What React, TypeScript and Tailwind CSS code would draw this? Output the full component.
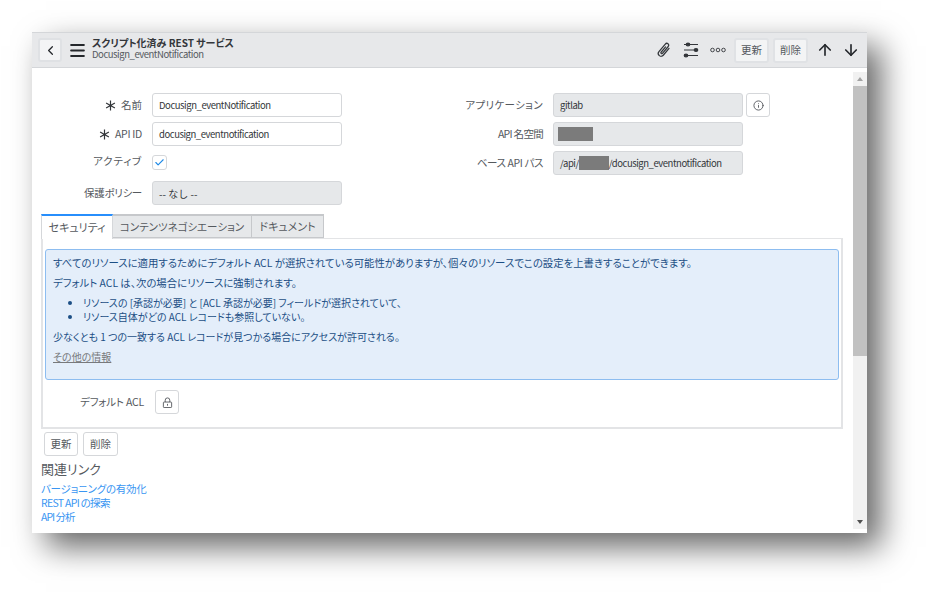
import { ArrowDown, ArrowUp, ChevronLeft, Info, Menu, Check } from "lucide-react";
import type { ReactNode } from "react";

const font = { fontFamily: '"Noto Sans CJK JP", sans-serif' };

function Label({ children, required, className = "" }: { children: ReactNode; required?: boolean; className?: string }) {
  return (
    <div className={"flex items-center justify-end gap-[5px] text-[10.5px] leading-[14px] text-[#55595e] " + className}>
      {required && (
        <svg viewBox="0 0 12 12" className="w-[11px] h-[11px] text-[#33363a]" fill="none" stroke="currentColor" strokeWidth="1.3">
          <path d="M6 0.5v11M1.2 3.2l9.6 5.6M10.8 3.2l-9.6 5.6" />
        </svg>
      )}
      <span>{children}</span>
    </div>
  );
}

function Field({ value, readOnly, children }: { value?: string; readOnly?: boolean; children?: ReactNode }) {
  return (
    <div
      className={
        "h-[24px] w-[190px] rounded-[3px] border px-[6px] flex items-center whitespace-nowrap text-[9.5px] tracking-[-0.45px] text-[#33363a] " +
        (readOnly ? "bg-[#e6e8ea] border-[#d5d7da]" : "bg-white border-[#d5d7da]")
      }
    >
      {value}
      {children}
    </div>
  );
}

function SmallBtn({ children }: { children: ReactNode }) {
  return (
    <button className="h-[25px] w-[35px] rounded-[3px] border-2 border-[#e0e2e5] bg-[#f3f4f5] text-[10.5px] text-[#55595e]">
      {children}
    </button>
  );
}

function Redacted({ w }: { w: string }) {
  return <span className={"inline-block h-[14px] bg-[#7b7b7b] " + w} />;
}

export default function App() {
  return (
    <div className="w-[932px] h-[598px] bg-white pl-[32px] pt-[32px] overflow-hidden [font-feature-settings:'palt']" style={font}>
      <div className="w-[835px] h-[501px] bg-white flex flex-col shadow-[14px_14px_30px_rgba(0,0,0,0.6)]">
        {/* header */}
        <div className="h-[36px] shrink-0 bg-[#e7e8ea] border-y border-[#d4d6d9] flex items-center pl-[6px] pr-[7px]">
          <button className="w-[24px] h-[24px] rounded-[3px] border-2 border-[#dfe1e4] bg-[#f3f4f5] grid place-items-center text-[#24272b]">
            <ChevronLeft size={15} strokeWidth={2} />
          </button>
          <Menu size={19} strokeWidth={2.6} className="ml-[6px] text-[#24272b]" />
          <div className="ml-[5px] -mt-[3px]">
            <div className="text-[10px] leading-[12px] font-bold text-[#33363a] whitespace-nowrap">スクリプト化済み REST サービス</div>
            <div className="text-[9.5px] tracking-[-0.45px] leading-[11px] text-[#55595e]">Docusign_eventNotification</div>
          </div>
          <div className="ml-auto flex items-center">
            <svg viewBox="0 0 16 16" className="w-[18px] h-[18px] text-[#33363a]" fill="none" stroke="currentColor" strokeWidth="1.1" strokeLinecap="round">
              <path transform="rotate(40 8 8)" d="M10.5 4v8a2.5 2.5 0 0 1-5 0V3.2a1.7 1.7 0 0 1 3.4 0v8a.8.8 0 0 1-1.6 0V5" />
            </svg>
            <svg viewBox="0 0 16 16" className="ml-[10px] w-[16px] h-[16px] text-[#33363a]" fill="none" stroke="currentColor" strokeWidth="1.1">
              <path d="M1 2.5h14M1 8h14M1 13.5h14" />
              <ellipse cx="5" cy="2.5" rx="1.8" ry="1.4" fill="currentColor" />
              <ellipse cx="13" cy="8" rx="1.8" ry="1.4" fill="currentColor" />
              <ellipse cx="3" cy="13.5" rx="1.8" ry="1.4" fill="currentColor" />
            </svg>
            <svg viewBox="0 0 16 6" className="ml-[11px] w-[16px] h-[6px] text-[#33363a]" fill="none" stroke="currentColor" strokeWidth="0.9">
              <circle cx="2.5" cy="3" r="1.8" />
              <circle cx="8" cy="3" r="1.8" />
              <circle cx="13.5" cy="3" r="1.8" />
            </svg>
            <div className="ml-[8px] flex gap-[4px]">
              <SmallBtn>更新</SmallBtn>
              <SmallBtn>削除</SmallBtn>
            </div>
            <ArrowUp size={18} strokeWidth={2.2} className="ml-[8px] text-[#24272b]" />
            <ArrowDown size={18} strokeWidth={2.2} className="ml-[8px] text-[#24272b]" />
          </div>
        </div>

        <div className="flex-1 min-h-0 flex">
          {/* content */}
          <div className="flex-1 pl-[9px] pr-[10px] pt-[25px]">
            <div className="flex">
              <div className="w-[300px] flex flex-col">
                <div className="grid grid-cols-[101px_190px] gap-x-[10px] gap-y-[5px] items-center">
                  <Label required>名前</Label>
                  <Field value="Docusign_eventNotification" />
                  <Label required className="tracking-[-0.3px]">API ID</Label>
                  <Field value="docusign_eventnotification" />
                  <Label className="tracking-[0.8px]">アクティブ</Label>
                  <div className="h-[15px] w-[15px] mt-[4px] mb-[1px] rounded-[3px] border border-[#d5d7da] grid place-items-center text-[#1f8ae6]">
                    <Check size={11} strokeWidth={2.4} />
                  </div>
                  <Label className="mt-[5px] tracking-[-0.3px]">保護ポリシー</Label>
                  <div className="mt-[5px]">
                    <Field readOnly>
                      <span className="text-[10px] tracking-normal [font-feature-settings:'pwid']">-- なし --</span>
                    </Field>
                  </div>
                </div>
              </div>
              <div className="ml-[101px] grid grid-cols-[101px_190px_24px] gap-x-[10px] gap-y-[5px] items-center self-start">
                <Label className="tracking-[0.35px]">アプリケーション</Label>
                <Field value="gitlab" readOnly />
                <button className="-ml-[7px] h-[24px] w-[24px] rounded-[3px] border border-[#d5d7da] grid place-items-center text-[#55595e]">
                  <Info size={11} />
                </button>
                <Label className="tracking-[-0.7px]">API 名空間</Label>
                <Field readOnly>
                  <span className="-ml-[2px] flex">
                    <Redacted w="w-[35px]" />
                  </span>
                </Field>
                <span />
                <Label className="tracking-[-0.4px]">ベース API パス</Label>
                <Field readOnly>
                  /api/<Redacted w="w-[30px]" />/docusign_eventnotification
                </Field>
                <span />
              </div>
            </div>

            {/* tabs */}
            <div className="mt-[9px] flex h-[24px] items-stretch text-[10.5px] text-[#55595e] whitespace-nowrap">
              <div className="w-[72px] text-[11px] bg-white border-t-2 border-x border-t-[#278efc] border-x-[#d5d7da] grid place-items-center relative z-10 h-[25px]">セキュリティ</div>
              <div className="w-[139px] bg-[#e6e8ea] border border-t-2 border-[#c6c8cb] border-l-0 grid place-items-center">コンテンツネゴシエーション</div>
              <div className="w-[72px] text-[11px] bg-[#e6e8ea] border border-t-2 border-[#c6c8cb] border-l-0 grid place-items-center">ドキュメント</div>
            </div>

            <div className="w-[802px] h-[191px] border-2 border-[#e3e4e6] border-t-[1px] px-[2px] pt-[10px]">
              <div className="w-[794px] h-[131px] bg-[#e4eefa] border border-[#8dbdf0] rounded-[3px] px-[7px] pt-[6px] text-[10.4px] leading-[14px] text-[#1c4f85]">
                <p>すべてのリソースに適用するためにデフォルト ACL が選択されている可能性がありますが、個々のリソースでこの設定を上書きすることができます。</p>
                <p className="mt-[6px]">デフォルト ACL は、次の場合にリソースに強制されます。</p>
                <ul className="mt-[6px] ml-[30px] list-disc text-[10px]">
                  <li>リソースの [承認が必要] と [ACL 承認が必要] フィールドが選択されていて、</li>
                  <li>リソース自体がどの ACL レコードも参照していない。</li>
                </ul>
                <p className="mt-[6px] text-[10px]">少なくとも 1 つの一致する ACL レコードが見つかる場合にアクセスが許可される。</p>
                <p className="mt-[6px] text-[10px] text-[#77797c] underline">その他の情報</p>
              </div>
              <div className="mt-[10px] flex items-center">
                <div className="w-[99px] text-right text-[10.5px] tracking-[-0.2px] leading-[14px] text-[#55595e]">デフォルト ACL</div>
                <button className="ml-[11px] h-[24px] w-[24px] rounded-[3px] border border-[#d5d7da] grid place-items-center text-[#55595e]">
                  <svg viewBox="0 0 12 12" className="w-[11px] h-[11px]" fill="none" stroke="currentColor" strokeWidth="1">
                    <path d="M3.5 5.5V3.5a2.5 2.5 0 0 1 5 0v2" />
                    <rect x="1.5" y="5.5" width="9" height="6" rx="0.8" />
                    <path d="M6 7.5v2" />
                  </svg>
                </button>
              </div>
            </div>

            <div className="mt-[3px] ml-[3px] flex gap-[5px]">
              <button className="h-[24px] w-[34px] rounded-[3px] border border-[#d5d7da] text-[10.5px] text-[#55595e]">更新</button>
              <button className="h-[24px] w-[35px] rounded-[3px] border border-[#d5d7da] text-[10.5px] text-[#55595e]">削除</button>
            </div>
            <div className="mt-[4px] text-[13px] leading-[18px] text-[#55595e]">関連リンク</div>
            <div className="mt-[4px] flex flex-col text-[10.5px] leading-[14px] text-[#3a96f2]">
              <span className="tracking-[-0.25px]">バージョニングの有効化</span>
              <span className="tracking-[-0.7px]">REST API の探索</span>
              <span className="tracking-[-1px]">API 分析</span>
            </div>
          </div>

          {/* scrollbar */}
          <div className="w-[14px] shrink-0 bg-[#f1f1f1] flex flex-col items-center mb-[4px] mt-[4px]">
            <div className="h-[14px] grid place-items-center">
              <div className="w-0 h-0 border-x-[3px] border-x-transparent border-b-[4px] border-b-[#a3a3a3]" />
            </div>
            <div className="w-full h-[270px] bg-[#c1c1c1]" />
            <div className="mt-auto h-[14px] grid place-items-center">
              <div className="w-0 h-0 border-x-[3px] border-x-transparent border-t-[4px] border-t-[#505050]" />
            </div>
          </div>
        </div>
      </div>
    </div>
  );
}
